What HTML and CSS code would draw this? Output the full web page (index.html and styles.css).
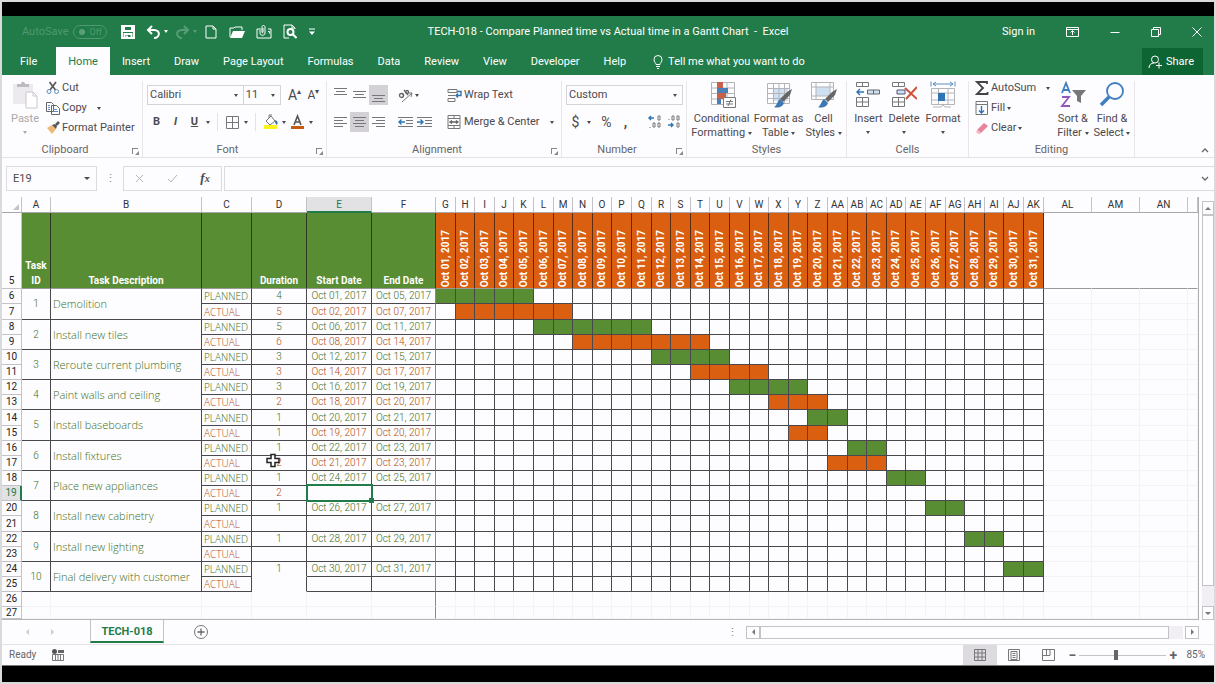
FILE: index.html
```html
<!DOCTYPE html>
<html lang="en">
<head>
<meta charset="utf-8">
<title>TECH-018 - Compare Planned time vs Actual time in a Gantt Chart - Excel</title>
<link rel="stylesheet" href="styles.css">
</head>
<body>
<div class="window">
  <header class="top">
    <div class="titlebar">
      <div class="quick">
        <label class="autosave">AutoSave <span class="toggle"><input type="checkbox" disabled> Off</span></label>
        <button class="q" aria-label="Save"><svg width="14" height="14" viewBox="0 0 14 14"><path d="M1 1h12v12H1zM3 1v5h8V1M3.500 13V9h7v4M6 10.500v2.500" class="w2"/></svg></button>
        <button class="q" aria-label="Undo"><svg width="15" height="14" viewBox="0 0 15 14"><path d="M6 1L2 5l4 4M2 5h6c7 0 6 8 0 8" class="w2"/></svg><i class="caret"></i></button>
        <button class="q dim" aria-label="Redo"><svg width="15" height="14" viewBox="0 0 15 14"><path d="M9 1l4 4-4 4M13 5H7C0 5 1 13 7 13" class="w2"/></svg><i class="caret"></i></button>
        <button class="q" aria-label="New"><svg width="14" height="14" viewBox="0 0 14 14"><path d="M2 1h7l3 3v9H2zM9 1v3h3" class="w1"/></svg></button>
        <button class="q" aria-label="Open"><svg width="16" height="14" viewBox="0 0 16 14"><path d="M1 12V3h4l1-1h7v3M1 12" class="w1"/><path d="M1 13L4 6h12l-3 7z" fill="#fff"/></svg></button>
        <button class="q" aria-label="Attach"><svg width="16" height="14" viewBox="0 0 16 14"><path d="M3 4H1v9h14V4h-3M12 6.500h1.500v2M4 3v5c0 3 5 3 5 0V2c0-2-3-2-3 0v5c0 1 1 1 1 0V3" class="w1"/></svg></button>
        <button class="q" aria-label="Print preview"><svg width="14" height="15" viewBox="0 0 14 15"><path d="M12 5V4L9 1H1v13h5M9 1v3h3" class="w1"/><circle cx="7.500" cy="8" r="3" class="w2"/><path d="M10 10.500l3.500 3.500" class="w2"/></svg></button>
        <button class="q" aria-label="Customize"><svg width="8" height="8" viewBox="0 0 8 8"><path d="M1 1h6" class="w1"/><path d="M1 3.500h6L4 7z" fill="#fff"/></svg></button>
      </div>
      <h1>TECH-018 - Compare Planned time vs Actual time in a Gantt Chart&nbsp; -&nbsp; Excel</h1>
      <div class="winctl">
        <a href="#" class="signin">Sign in</a>
        <button aria-label="Ribbon display"><svg width="13" height="10" viewBox="0 0 13 10"><path d="M.5.5h12v9H.5zM.5 2.500h12M6.500 8V4M4.500 5.500l2-2 2 2" class="w1"/></svg></button>
        <button aria-label="Minimize"><svg width="10" height="10" viewBox="0 0 10 10"><path d="M.5 5.500h9" class="w1"/></svg></button>
        <button aria-label="Restore"><svg width="10" height="10" viewBox="0 0 10 10"><path d="M.5 2.500h7v7h-7zM2.500 2V.5h7v7H8" class="w1"/></svg></button>
        <button aria-label="Close"><svg width="10" height="10" viewBox="0 0 10 10"><path d="M.5.5l9 9M9.500.5l-9 9" class="w1"/></svg></button>
      </div>
    </div>
    <nav class="tabs">
      <button class="file">File</button><button class="on">Home</button><button>Insert</button><button>Draw</button><button>Page Layout</button><button>Formulas</button><button>Data</button><button>Review</button><button>View</button><button>Developer</button><button>Help</button>
      <button class="tell"><svg width="10" height="14" viewBox="0 0 10 14"><path d="M3 9.500C3 8 1 7 1 4.500a4 4 0 0 1 8 0C9 7 7 8 7 9.500zM3 11.500h4M4 13.500h2" class="w1"/></svg>Tell me what you want to do</button>
      <button class="share"><svg width="14" height="14" viewBox="0 0 14 14"><circle cx="7" cy="4.500" r="3.500" class="w1"/><path d="M1 13c0-3 2-5 5-5M8 10.500h6M11 7.500v6" class="w1"/></svg>Share</button>
    </nav>
  </header>

  <section class="ribbon">
    <div class="group clipboard">
      <div class="body">
        <button class="big off"><svg width="26" height="28" viewBox="0 0 26 28"><path d="M1 3h20v20H1z" fill="#ece9ef"/><path d="M5 6V3h4c0-3 4-3 4 0h4v3z" fill="#bdbac0"/><path d="M14 11h7l4 4v12H14z" fill="#fff" stroke="#c9c6cc"/><path d="M21 11v4h4" fill="none" stroke="#c9c6cc"/></svg><span>Paste</span><i class="caret"></i></button>
        <div class="stack">
          <button><svg width="14" height="14" viewBox="0 0 14 14"><path d="M3.500 1l6 8M10 1L4 9" stroke="#555" stroke-width="1.600" fill="none"/><circle cx="3" cy="10.500" r="2" class="b1"/><circle cx="10.500" cy="10.500" r="2" class="b1"/></svg>Cut</button>
          <button><svg width="14" height="14" viewBox="0 0 14 14"><path d="M.5 1.500h5l2 2v7h-7zM5.500 4.500h5l3 3v6h-8z" fill="#fff" stroke="#666"/><path d="M2 4.500h2M2 6.500h2M2 8.500h2M7 8.500h4M7 10.500h5" class="b1"/></svg>Copy <i class="caret gap"></i></button>
          <button><svg width="14" height="14" viewBox="0 0 14 14"><path d="M1 7l5-3 4 4-4 5z" fill="#f0b878"/><path d="M6 4l3-1 2 2-1 3z" fill="#555"/><path d="M10 4l3-3" stroke="#555" stroke-width="2.500"/></svg>Format Painter</button>
        </div>
      </div>
      <h2>Clipboard</h2><i class="launch"></i>
    </div>

    <div class="group font">
      <div class="body rows">
        <div class="row">
          <label class="combo wide"><select aria-label="Font"><option>Calibri</option></select><i class="caret"></i></label><label class="combo small"><select aria-label="Font size"><option>11</option></select><i class="caret"></i></label>
          <button class="ico grow" aria-label="Grow font">A<sup>▴</sup></button><button class="ico shrink" aria-label="Shrink font">A<sup>▾</sup></button>
        </div>
        <div class="row tight">
          <button class="ico"><b>B</b></button><button class="ico ital"><b>I</b></button><button class="ico"><b><u>U</u></b></button><i class="caret"></i><i class="sep"></i>
          <button class="ico" aria-label="Borders"><svg width="13" height="13" viewBox="0 0 13 13"><path d="M.5.5h12v12H.5zM6.500.5v12M.5 6.500h12" class="g1"/></svg></button><i class="caret"></i><i class="sep"></i>
          <button class="ico" aria-label="Fill colour"><svg width="16" height="16" viewBox="0 0 16 16"><path d="M3 7l5-5 4 5-5 4zM6 4V1h3" fill="#fff" stroke="#777"/><path d="M12 6c3 1 3 3 2 5-2-1-2-3-2-5" fill="#2f74b5"/><path d="M1 11h13v4H1z" fill="#fdf31a"/></svg></button><i class="caret"></i>
          <button class="ico" aria-label="Font colour"><svg width="15" height="16" viewBox="0 0 15 16"><path d="M4 11L7.500 2 11 11M5 8h5" stroke="#555" stroke-width="1.600" fill="none"/><path d="M1 12h13v3H1z" fill="#c55a11"/></svg></button><i class="caret"></i>
        </div>
      </div>
      <h2>Font</h2><i class="launch"></i>
    </div>

    <div class="group align">
      <div class="body rows">
        <div class="row">
          <button class="ico" aria-label="Top align"><svg width="13" height="18" viewBox="0 0 13 18"><path d="M0 2.500h13M2 5.500h9M0 8.500h13" class="g1"/></svg></button><button class="ico" aria-label="Middle align"><svg width="13" height="18" viewBox="0 0 13 18"><path d="M0 5.500h13M2 8.500h9M0 11.500h13" class="g1"/></svg></button><button class="ico on" aria-label="Bottom align"><svg width="13" height="18" viewBox="0 0 13 18"><path d="M0 9.500h13M2 12.500h9M0 15.500h13" class="g1"/></svg></button>
          <button class="ico orient" aria-label="Orientation"><svg width="15" height="15" viewBox="0 0 15 15"><path d="M4 14L14 5M14 5l-1 4M14 5l-4 0" class="g1"/><circle cx="3.500" cy="7.500" r="2" class="g2"/><path d="M4 5l2 3M6 2l4 5" class="g2"/><circle cx="9" cy="4" r="1.500" class="g2"/></svg></button><i class="caret"></i>
          <button class="lab"><svg width="15" height="15" viewBox="0 0 15 15"><path d="M1 1.500h9v3H1zM1 7.500h7M1 10.500h7v3H1z" class="g1"/><path d="M10 3.500h4v4H9M11 5.500l-2 2 2 2" class="b2"/></svg>Wrap Text</button>
        </div>
        <div class="row">
          <button class="ico" aria-label="Align left"><svg width="13" height="18" viewBox="0 0 13 18"><path d="M0 4.500h13M0 7.500h9M0 10.500h13M0 13.500h9" class="g1"/></svg></button><button class="ico on" aria-label="Center"><svg width="13" height="18" viewBox="0 0 13 18"><path d="M0 4.500h13M2 7.500h9M0 10.500h13M2 13.500h9" class="g1"/></svg></button><button class="ico" aria-label="Align right"><svg width="13" height="18" viewBox="0 0 13 18"><path d="M0 4.500h13M4 7.500h9M0 10.500h13M4 13.500h9" class="g1"/></svg></button>
          <button class="ico orient" aria-label="Decrease indent"><svg width="15" height="13" viewBox="0 0 15 13"><path d="M0 1.500h15M8 4.500h7M8 7.500h7M0 10.500h15" class="g1"/><path d="M7 6H1M3.500 3.500L1 6l2.500 2.500" class="b2"/></svg></button><button class="ico" aria-label="Increase indent"><svg width="15" height="13" viewBox="0 0 15 13"><path d="M0 1.500h15M8 4.500h7M8 7.500h7M0 10.500h15" class="g1"/><path d="M0 6h6M3.500 3.500L6 6 3.500 8.500" class="b2"/></svg></button>
          <button class="lab"><svg width="15" height="14" viewBox="0 0 15 14"><path d="M1 .5h12v13H1zM1 3.500h12M1 10.500h12M7 .5v3M7 10.500v3" class="g1"/><path d="M3 7h8M5 5.500L3 7l2 1.500M9 5.500L11 7 9 8.500" class="g2"/></svg>Merge &amp; Center <i class="caret gap"></i></button>
        </div>
      </div>
      <h2>Alignment</h2><i class="launch"></i>
    </div>

    <div class="group number">
      <div class="body rows">
        <div class="row"><label class="combo full"><select aria-label="Number format"><option>Custom</option></select><i class="caret"></i></label></div>
        <div class="row tight"><button class="ico sym">$</button><i class="caret"></i><button class="ico sym pct">%</button><button class="ico sym"><b>,</b></button><i class="sep"></i>
          <button class="ico" aria-label="Increase decimal"><svg width="14" height="14" viewBox="0 0 14 14"><path d="M6 3H1M3 1L1 3l2 2" class="b2"/><path d="M10 1h2v4h-2zM5 8h2v4H5zM10 8h2v4h-2zM2 12v1" class="g1"/></svg></button><button class="ico" aria-label="Decrease decimal"><svg width="14" height="14" viewBox="0 0 14 14"><path d="M1 10h5M4 8l2 2-2 2" class="b2"/><path d="M5 1h2v4H5zM10 1h2v4h-2zM10 8h2v4h-2zM2 4v1" class="g1"/></svg></button></div>
      </div>
      <h2>Number</h2><i class="launch"></i>
    </div>

    <div class="group styles">
      <div class="body">
        <button class="big"><svg width="28" height="28" viewBox="0 0 28 28"><path d="M3.500 1.500h23v22h-23zM3 7h24M3 12.500h24M3 18h24M19 1v22" class="l1"/><path d="M9 1h6v6H9zM9 12h9v6H9z" fill="#c9604a"/><path d="M9 7h11v5H9zM9 18h4v5H9z" fill="#4a7fb8"/><path d="M15.500 16.500h12v10h-12z" fill="#fff" stroke="#777"/><path d="M18 20.500h7M18 23h7M23 18.500l-3 6.500" class="g1"/></svg><span>Conditional<br>Formatting <i class="caret"></i></span></button>
        <button class="big"><svg width="28" height="28" viewBox="0 0 28 28"><path d="M8 8h15v12H8z" fill="#cfe0f3"/><path d="M2.500 2.500h22v20h-22zM2 7.500h22M2 12.500h22M2 17.500h22M8.500 2v20M14 2v20M19.500 2v20" class="l1"/><path d="M27 8l-2 6-7 7-3-3 7-7z" fill="#666"/><path d="M15 18l4 4c-2 5-7 5-10 4 3-1 3-6 6-8z" fill="#3c78b4"/></svg><span>Format as<br>Table <i class="caret"></i></span></button>
        <button class="big"><svg width="28" height="28" viewBox="0 0 28 28"><path d="M6 6h14v9H6z" fill="#cfe0f3"/><path d="M1.500 1.500h22v17h-22zM1 6h22M6 1v17M20 1v17M1 15h22" class="l1"/><path d="M27 8l-2 6-7 7-3-3 7-7z" fill="#666"/><path d="M14 18l4 4c-2 5-7 5-10 4 3-1 3-6 6-8z" fill="#3c78b4"/></svg><span>Cell<br>Styles <i class="caret"></i></span></button>
      </div>
      <h2>Styles</h2>
    </div>

    <div class="group cells">
      <div class="body">
        <button class="big"><svg width="26" height="28" viewBox="0 0 26 28"><path d="M1.500 1.500h12v4h-12zM7.500 1v5M1.500 16.500h12v9h-12zM7.500 16v9M1 21h12" class="g1"/><path d="M12.500 9h12v4h-12zM18.500 9v4" fill="#cfe0f3" stroke="#666"/><path d="M9 11H2M5 8l-3 3 3 3" class="b2"/></svg><span>Insert</span><i class="caret"></i></button>
        <button class="big"><svg width="26" height="28" viewBox="0 0 26 28"><path d="M1.500 1.500h12v4h-12zM7.500 1v5M1.500 16.500h12v9h-12zM7.500 16v9M1 21h12" class="g1"/><path d="M6 9h8v4H6z" fill="#cfe0f3" stroke="#557"/><path d="M14 7l12 11M26 6L15 18" stroke="#cf5238" stroke-width="2" fill="none"/></svg><span>Delete</span><i class="caret"></i></button>
        <button class="big"><svg width="26" height="28" viewBox="0 0 26 28"><path d="M1 .5v5M25 .5v5M3 3h20M6 1L3 3l3 2M20 1l3 2-3 2" class="b1"/><path d="M1.500 7.500h23v16h-23zM1 12h24M1 19h24M8.500 7v16M18 7v16M3 26h8l2-2 2 2h6" class="l1"/><path d="M8 12h7v8H8z" fill="#2f74b5"/></svg><span>Format</span><i class="caret"></i></button>
      </div>
      <h2>Cells</h2>
    </div>

    <div class="group editing">
      <div class="body">
        <div class="stack">
          <button><svg width="14" height="14" viewBox="0 0 14 14"><path d="M12 3V1H2l6 6-6 6h10.500v-2" stroke="#444" stroke-width="1.800" fill="none"/></svg>AutoSum <i class="caret gap"></i></button>
          <button><svg width="14" height="14" viewBox="0 0 14 14"><path d="M1 .5h11.500v13H1zM1 3.500h11" class="g1"/><path d="M6.500 5v7M4 9.500L6.500 12 9 9.500" class="b2"/></svg>Fill <i class="caret"></i></button>
          <button><svg width="14" height="14" viewBox="0 0 14 14"><path d="M2 9l7-7 4 3-7 7z" fill="#e8839a"/><path d="M2 9l4 3-1 1H3l-2-2z" fill="#f5bcc8"/></svg>Clear <i class="caret"></i></button>
        </div>
        <button class="big"><svg width="28" height="28" viewBox="0 0 28 28"><path d="M3 12L7 2l4 10M4.500 9h5" stroke="#3f7fbf" stroke-width="1.800" fill="none"/><path d="M3 16h7l-7 9h8" stroke="#9058b8" stroke-width="1.800" fill="none"/><path d="M13 9h14l-5 6v7l-4-2v-5z" fill="#777"/></svg><span>Sort &amp;<br>Filter <i class="caret"></i></span></button>
        <button class="big"><svg width="26" height="28" viewBox="0 0 26 28"><circle cx="16" cy="10" r="8" fill="none" stroke="#3f7fbf" stroke-width="1.800"/><path d="M10 16l-8 8" stroke="#3f7fbf" stroke-width="3.500"/></svg><span>Find &amp;<br>Select <i class="caret"></i></span></button>
      </div>
      <h2>Editing</h2>
    </div>
    <button class="collapse" aria-label="Collapse ribbon"><svg width="8" height="5" viewBox="0 0 8 5"><path d="M1 4l3-3 3 3" class="g2"/></svg></button>
  </section>

  <section class="formula">
    <label class="namebox"><input aria-label="Name box" value="E19"><i class="caret"></i></label>
    <span class="dots">⋮</span>
    <div class="fxbox"><button aria-label="Cancel"><svg width="9" height="9" viewBox="0 0 9 9"><path d="M1 1l7 7M8 1L1 8" class="l1"/></svg></button><button aria-label="Enter"><svg width="11" height="9" viewBox="0 0 11 9"><path d="M1 5l3 3 6-7" class="l1"/></svg></button><button class="fx">f<small>x</small></button></div>
    <label class="fbar"><input aria-label="Formula"><svg width="8" height="6" viewBox="0 0 8 6"><path d="M1 1l3 3 3-3" class="g2"/></svg></label>
  </section>

  <main class="sheet">
    <div class="grid"><table id="grid"></table></div>
    <div class="vscroll"><button aria-label="Scroll up"><i class="tri up"></i></button><div class="thumb"></div><div class="track"></div><button aria-label="Scroll down"><i class="tri down"></i></button></div>
  </main>

  <div class="sheettabs">
    <button class="nav" aria-label="Previous sheet"><i class="tri left pale"></i></button><button class="nav" aria-label="Next sheet"><i class="tri right pale"></i></button>
    <button class="tab">TECH-018</button>
    <button class="add" aria-label="New sheet"><svg width="14" height="14" viewBox="0 0 14 14"><circle cx="7" cy="7" r="6.500" class="g1"/><path d="M7 3.500v7M3.500 7h7" class="g2"/></svg></button>
    <span class="dots split">⋮</span>
    <div class="hscroll"><button aria-label="Scroll left"><i class="tri left"></i></button><div class="thumb"></div><div class="track"></div><button aria-label="Scroll right"><i class="tri right"></i></button></div>
  </div>

  <footer class="status">
    <span>Ready</span>
    <svg width="12" height="12" viewBox="0 0 12 12"><circle cx="2.500" cy="2.500" r="2.500" fill="#555"/><path d="M6 1h6v3H6z" fill="#666"/><path d="M.5 5.500h11v6H.5zM3.500 6v5M6 5v6M8.500 5v6" class="g1"/></svg>
    <div class="views">
      <button class="on" aria-label="Normal view"><svg width="12" height="12" viewBox="0 0 12 12"><path d="M.5.5h11v11H.5zM4 0v12M8 0v12M0 4h12M0 8h12" class="g1"/></svg></button>
      <button aria-label="Page layout view"><svg width="12" height="12" viewBox="0 0 12 12"><path d="M.5.5h11v11H.5zM3 2.500h6v8H3zM4.500 4.500h3M4.500 6.500h3M4.500 8.500h3" class="g1"/></svg></button>
      <button aria-label="Page break view"><svg width="13" height="12" viewBox="0 0 13 12"><path d="M.5.5h12v11H.5zM4.500 0v6.500M.5 6.500h7.500V0" class="g1"/></svg></button>
      <button class="z">−</button><input type="range" min="10" max="200" value="90" aria-label="Zoom"><button class="z">+</button><span class="pc">85%</span>
    </div>
  </footer>
</div>
<script src="script.js"></script>
</body>
</html>
```
FILE: styles.css
```css
* { box-sizing: border-box; }
body { margin: 0; font: 11px/14px Roboto, "Open Sans", sans-serif; color: #4c4a4e; background: #d9dadb; }
button, input, select { font: inherit; color: inherit; background: none; border: 0; padding: 0; margin: 0; outline: 0; }
svg { display: block; flex: none; }
.w1, .w2, .g1, .g2, .b1, .b2, .l1 { fill: none; }
.w1 { stroke: #fff; }
.w2 { stroke: #fff; stroke-width: 2; }
.g1 { stroke: #777; }
.g2 { stroke: #666; stroke-width: 1.3; }
.b1 { stroke: #5b8ec0; }
.b2 { stroke: #2f74b5; stroke-width: 1.4; }
.l1 { stroke: #b4b4b8; }
.caret { display: inline-block; flex: none; border: 3px solid transparent; border-top-color: currentColor; border-bottom: 0; width: 0; height: 0; vertical-align: middle; }
.window { height: 100vh; border: 2px solid #d9dadb; display: flex; flex-direction: column; background: #fdfcff; }
.window::before { content: ""; height: 14px; background: #000; flex: none; }
.window::after { content: ""; height: 16px; background: #000; border-top: 1px solid #777; flex: none; }

.top { background: #217c4a; color: #fff; flex: none; }
.titlebar { display: grid; grid-template-columns: 1fr auto 1fr; height: 31px; align-items: center; }
.titlebar h1 { font-size: 11px; font-weight: 400; margin: 0; white-space: nowrap; }
.quick { display: flex; align-items: center; padding-left: 20px; gap: 11px; }
.q { display: flex; align-items: center; gap: 3px; }
.q .caret { margin-right: -4px; border-width: 3px 2px 0; }
.dim { opacity: .25; }
.autosave { display: flex; align-items: center; gap: 5px; color: #4e9a70; margin-right: 3px; }
.toggle { display: flex; align-items: center; justify-content: space-evenly; width: 34px; height: 14px; border: 1px solid #4e9a70; border-radius: 7px; font-size: 9px; line-height: 12px; }
.toggle input { appearance: none; width: 6px; height: 6px; border-radius: 50%; background: #58a178; }
.winctl { display: flex; align-items: center; justify-content: flex-end; gap: 31px; padding-right: 12px; }
.signin { color: #fff; text-decoration: none; }
.tabs { display: flex; height: 28px; padding-left: 6px; }
.tabs button { padding: 2px 12px 0; white-space: nowrap; }
.tabs .file { padding-right: 19px; }
.tabs .on { background: #fdfcff; color: #217c4a; }
.tabs .tell { display: flex; align-items: center; gap: 5px; margin-left: 3px; }
.tabs .share { display: flex; align-items: center; gap: 4px; margin: 1px 11px 0 auto; padding: 0 9px 0 6px; background: #0d6534; }

.ribbon { display: flex; height: 83px; flex: none; padding-top: 6px; border-bottom: 1px solid #e4e2e6; position: relative; }
.group { display: flex; flex-direction: column; position: relative; min-width: 0; border-right: 1px solid #e8e6ea; }
.body { flex: 1; display: flex; }
.group h2 { margin: 0; font-size: 11px; font-weight: 400; line-height: 14px; text-align: center; color: #666; padding-right: 14px; }
.styles h2, .cells h2, .editing h2 { padding: 0; }
.launch { position: absolute; right: 4px; bottom: 3px; width: 6px; height: 6px; border: 1px solid #888; border-right: 0; border-bottom: 0; }
.launch::after { content: ""; position: absolute; right: -1px; bottom: -1px; border: 2px solid #888; border-top-color: transparent; border-left-color: transparent; }
.clipboard { flex: 0 0 141px; }
.font { flex: 0 0 184px; }
.align { flex: 0 0 235px; }
.number { flex: 0 0 125px; }
.styles { flex: 0 0 160px; }
.cells { flex: 0 0 122px; }
.editing { flex: 0 0 166px; }
.big { display: flex; flex-direction: column; align-items: center; line-height: 14px; white-space: nowrap; }
.big svg { margin-bottom: 3px; }
.big > .caret { margin-top: 5px; }
.big .caret, .stack .caret, .row .caret { border-width: 3px 2px 0; }
.off { color: #aaa; }
.clipboard .big { margin-left: 9px; }
.clipboard .stack { margin-left: 7px; }
.stack { display: flex; flex-direction: column; gap: 6px; white-space: nowrap; }
.stack button { display: flex; align-items: center; gap: 2px; height: 14px; }
.stack .caret.gap, .lab .caret.gap { margin-left: 8px; }
.styles .body { justify-content: center; gap: 2px; }
.cells .body { justify-content: center; gap: 6px; }
.editing .body { padding-left: 6px; }
.editing .stack { margin-right: 7px; }
.editing .big + .big { margin-left: 5px; }
.rows { flex-direction: column; padding: 4px 3px 0 4px; gap: 7px; }
.row { display: flex; align-items: center; height: 20px; }
.combo { display: flex; align-items: center; height: 20px; border: 1px solid #d5d3d8; padding: 0 5px 0 2px; }
.combo select { appearance: none; flex: 1; min-width: 0; }
.combo.wide { width: 99px; }
.combo.small { width: 38px; border-left: 0; }
.combo.full { width: 117px; }
.ico { display: flex; align-items: center; justify-content: center; width: 19px; height: 20px; flex: none; }
.ico.on { background: #d3d1d5; }
.ital { font-style: italic; }
.grow { font-size: 14px; margin-left: 4px; }
.shrink { font-size: 12px; }
.ico sup { font-size: 8px; line-height: 8px; margin-bottom: 6px; }
.sep { width: 1px; height: 18px; background: #e4e2e6; margin: 0 5px; }
.tight .caret { margin: 0 2px; }
.orient { margin-left: 8px; }
.lab { display: flex; align-items: center; gap: 2px; margin-left: auto; white-space: nowrap; }
.align .lab { width: 111px; }
.sym { font-size: 14px; }
.pct { margin-left: 4px; }
.collapse { position: absolute; right: 5px; bottom: 4px; }

.formula { display: flex; height: 39px; flex: none; padding: 8px 0 6px 4px; }
.formula > * { height: 25px; }
.namebox { display: flex; align-items: center; width: 91px; border: 1px solid #dcdade; padding: 0 6px; }
.namebox input { flex: 1; min-width: 0; }
.dots { width: 26px; text-align: center; line-height: 25px; color: #888; }
.fxbox { display: flex; align-items: center; justify-content: space-around; width: 99px; border: 1px solid #dcdade; }
.fx { font: italic 13px/14px "Liberation Serif", serif; font-weight: 700; }
.fx small { font-size: 10px; }
.fbar { flex: 1; display: flex; align-items: center; margin-left: 2px; border: 1px solid #dcdade; border-right: 0; padding-right: 5px; }
.fbar input { flex: 1; }

.sheet { flex: 1; min-height: 0; display: flex; overflow: hidden; }
.grid { flex: 1; min-width: 0; overflow: hidden; border-right: 1px solid #b0aeb2; border-bottom: 1px solid #b8b6ba; }
#grid { table-layout: fixed; width: 100%; border-collapse: separate; border-spacing: 0; font-size: 10px; line-height: 12px; }
#grid th, #grid td { padding: 0; overflow: hidden; white-space: nowrap; text-align: center; font-weight: 300; border-right: 1px solid #f4f2f6; border-bottom: 1px solid #f4f2f6; }
.c-row { width: 20px; } .c-a { width: 29px; } .c-b { width: 151px; } .c-c { width: 50px; } .c-d { width: 55px; } .c-e { width: 65px; } .c-f { width: 64px; }
.c-day { width: 20px; }
.c-day:nth-child(5n+4), .c-day:nth-child(5n+1) { width: 19px; }
.c-wide { width: 48px; }
#grid thead th { height: 16px; padding-top: 1px; font-weight: 400; color: #333; border-right-color: #c4c2c6; border-bottom-color: #a8a6aa; }
#grid thead .sel { background: #e2e1e4; color: #217c4a; border-bottom: 2px solid #217c4a; }
#grid .corner { vertical-align: bottom; }
.corner i { display: block; margin: 0 2px 2px auto; width: 0; border: 3px solid #c4c2c6; border-top-color: transparent; border-left-color: transparent; }
#grid tbody tr { height: 15px; }
#grid tbody tr:nth-child(7n+3) { height: 16px; }
#grid tbody tr.head { height: 76px; }
#grid tbody tr.last { height: 12px; line-height: 11px; }
#grid tbody th { font-weight: 400; color: #222; border-right-color: #c4c2c6; border-bottom-color: #c4c2c6; }
#grid tbody th.sel { background: #e2e1e4; color: #217c4a; border-right: 2px solid #217c4a; }
#grid .head th, #grid .head td { vertical-align: bottom; line-height: 15px; }
#grid .head td { font-weight: 700; color: #fff; border-bottom-color: #999; }
#grid .head .g { background: #588d34; border-right-color: #2c3c20; white-space: normal; }
#grid .head .o { background: #da5f10; border-right-color: #5a2c10; }
#grid .head .blank { border-right-color: #fdfcff; }
.head .o span { display: inline-block; writing-mode: vertical-rl; transform: rotate(180deg); vertical-align: bottom; line-height: 18px; padding-top: 1px; }
#grid td.box { border-color: #4a484c; }
#grid td.open { border-bottom-color: transparent; }
#grid td.name { text-align: left; padding-left: 2px; font: 300 11px/12px "Open Sans", sans-serif; }
#grid td.kind { text-align: left; padding-left: 2px; font: 300 10px/12px "Open Sans", sans-serif; }
#grid td.freeze { border-right-color: #8a888c; }
td.p, td.name, td.id { color: #3c7020; }
td.a { color: #b04e0c; }
td.bar-p { background: #588d34; }
td.bar-a { background: #da5f10; }
#grid td.cursor { position: relative; overflow: visible; }
.cursor svg { position: absolute; left: 14px; top: -3px; }
#grid td.active { position: relative; overflow: visible; }
.active::before { content: ""; position: absolute; inset: -2px -2px -2px -1px; border: 2px solid #217c4a; }
.active::after { content: ""; position: absolute; right: -3px; bottom: -3px; width: 5px; height: 5px; background: #217c4a; }
.vscroll { width: 15px; padding: 4px 0 0 3px; display: flex; flex-direction: column; flex: none; }
.vscroll > * { border: 1px solid #c4c2c6; height: 14px; flex: none; display: flex; align-items: center; justify-content: center; }
.vscroll .thumb { flex: 1; background: #fdfcff; }
.vscroll .track, .hscroll .track { background: #f1eff3; border-color: #f1eff3; }
.vscroll .track { height: 20px; }
.tri { border: 3px solid transparent; width: 0; height: 0; }
.tri.up { border-bottom-color: #777; border-top: 0; }
.tri.down { border-top-color: #777; border-bottom: 0; }
.tri.left { border-right-color: #777; border-left: 0; }
.tri.right { border-left-color: #777; border-right: 0; }
.tri.left.pale { border-right-color: #ccc; }
.tri.right.pale { border-left-color: #ccc; }

.sheettabs { display: flex; height: 25px; flex: none; align-items: center; padding-left: 13px; border-bottom: 1px solid #e4e2e6; }
.nav { width: 25px; display: flex; justify-content: center; }
.tab { align-self: flex-start; height: 23px; width: 74px; margin-left: 25px; padding-top: 2px; border: solid #c4c2c6; border-width: 0 1px; border-bottom: 2px solid #217c4a; color: #217c4a; font-weight: 700; font-size: 11px; }
.add { margin-left: 30px; }
.split { margin-left: auto; width: 28px; }
.hscroll { display: flex; width: 453px; height: 13px; margin-right: 15px; }
.hscroll > * { border: 1px solid #c4c2c6; width: 14px; display: flex; align-items: center; justify-content: center; }
.hscroll .thumb { flex: 1; }
.hscroll .track { margin-right: 2px; }
.status { display: flex; align-items: center; height: 20px; flex: none; padding-left: 7px; gap: 16px; color: #666; font-size: 10px; }
.views { display: flex; align-items: center; margin-left: auto; height: 100%; padding-right: 9px; }
.views button { width: 34px; height: 100%; display: flex; align-items: center; justify-content: center; }
.views .on { background: #dddbdf; }
.views .z { width: 14px; font-size: 14px; font-weight: 700; }
.views input { appearance: none; width: 87px; height: 1px; background: #c4c2c6; }
.views input::-webkit-slider-thumb { appearance: none; width: 4px; height: 10px; background: #666; }
.pc { margin-left: 6px; font-size: 10px; }
```
FILE: script.js
```js
const tasks = [
  ["Demolition", [4, 1, 5], [5, 2, 7]],
  ["Install new tiles", [5, 6, 11], [6, 8, 14]],
  ["Reroute current plumbing", [3, 12, 15], [3, 14, 17]],
  ["Paint walls and ceiling", [3, 16, 19], [2, 18, 20]],
  ["Install baseboards", [1, 20, 21], [1, 19, 20]],
  ["Install fixtures", [1, 22, 23], [2, 21, 23]],
  ["Place new appliances", [1, 24, 25], [2]],
  ["Install new cabinetry", [1, 26, 27], []],
  ["Install new lighting", [1, 28, 29], []],
  ["Final delivery with customer", [1, 30, 31], []]
];
const DAYS = 31;
const date = d => d ? "Oct " + String(d).padStart(2, "0") + ", 2017" : "";
const letter = i => (i > 25 ? "A" : "") + String.fromCharCode(65 + i % 26);
const td = (cls, text = "", attr = "") => `<td class="${cls}" ${attr}>${text}</td>`;
const blanks = td("blank").repeat(4);
const pointer = '<svg width="15" height="15" viewBox="0 0 15 15"><path d="M5 1.500h4v4h4v4H9v4H5v-4H1v-4h4z" fill="#fff" stroke="#222" stroke-width="1.500"/></svg>';

let html = "<colgroup>" + ["row", "a", "b", "c", "d", "e", "f"].map(c => `<col class="c-${c}">`).join("")
  + '<col class="c-day">'.repeat(DAYS) + '<col class="c-wide">'.repeat(3) + "<col></colgroup>";

html += '<thead><tr><th class="corner"><i></i></th>';
for (let i = 0; i < 40; i++) html += `<th class="${i === 4 ? "sel" : ""}">${letter(i)}</th>`;
html += "<th></th></tr></thead><tbody>";

html += '<tr class="head"><th>5</th>'
  + ["Task ID", "Task Description", "", "Duration", "Start Date", "End Date"].map(t => td("g", t)).join("");
for (let d = 1; d <= DAYS; d++) html += td("o", `<span>${date(d)}</span>`);
html += blanks + "</tr>";

tasks.forEach(([name, planned, actual], t) => {
  [planned, actual].forEach(([duration, start, end], k) => {
    const row = 6 + t * 2 + k;
    const who = k ? "a" : "p";
    html += `<tr><th class="${row === 19 ? "sel" : ""}">${row}</th>`;
    if (!k) html += td("box id", t + 1, 'rowspan="2"') + td("box name", name, 'rowspan="2"');
    html += td("box kind " + who, k ? "ACTUAL" : "PLANNED");
    html += td(`box ${who} ${row > 23 ? "open" : ""} ${row === 17 ? "cursor" : ""}`, (duration || "") + (row === 17 ? pointer : ""));
    html += td(`box date ${who} ${row === 19 ? "active" : ""}`, date(start)) + td("box date freeze " + who, date(end));
    for (let d = 1; d <= DAYS; d++) html += td("box " + (d >= start && d <= end ? "bar-" + who : ""));
    html += blanks + "</tr>";
  });
});
[26, 27].forEach(row => {
  html += `<tr class="${row === 27 ? "last" : ""}"><th>${row}</th>` + td("").repeat(5) + td("freeze") + td("").repeat(DAYS) + blanks + "</tr>";
});
document.getElementById("grid").innerHTML = html + "</tbody>";
```
